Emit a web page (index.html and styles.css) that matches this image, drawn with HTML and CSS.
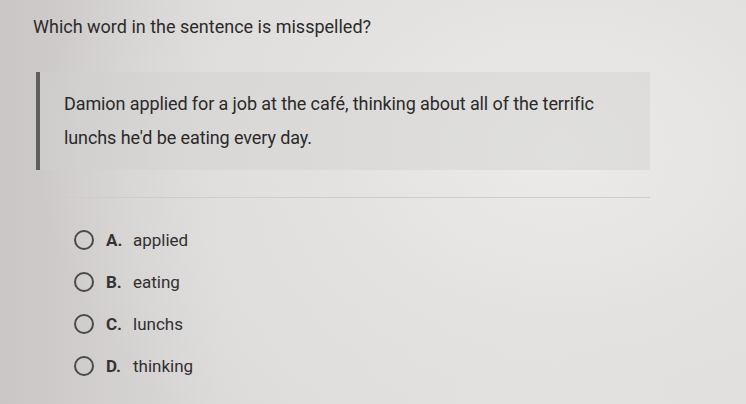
FILE: index.html
```html
<!DOCTYPE html>
<html>
<head>
<meta charset="utf-8">
<link rel="stylesheet" href="styles.css">
</head>
<body>
<main class="page">
  <h1 class="question">Which word in the sentence is misspelled?</h1>
  <blockquote class="passage">
    <p>Damion applied for a job at the café, thinking about all of the terrific lunchs he'd be eating every day.</p>
  </blockquote>
  <hr class="divider">
  <ul class="options">
    <li class="option"><span class="radio"></span><span class="letter">A.</span><span class="answer">applied</span></li>
    <li class="option"><span class="radio"></span><span class="letter">B.</span><span class="answer">eating</span></li>
    <li class="option"><span class="radio"></span><span class="letter">C.</span><span class="answer">lunchs</span></li>
    <li class="option"><span class="radio"></span><span class="letter">D.</span><span class="answer">thinking</span></li>
  </ul>
</main>
</body>
</html>
```
FILE: styles.css
```css
html, body {
  margin: 0;
  padding: 0;
  width: 746px;
  height: 404px;
  overflow: hidden;
}
body {
  background:
    radial-gradient(ellipse 520px 380px at 560px 150px, #ecebe9 0%, #e4e2e0 45%, rgba(210,206,205,0) 100%),
    linear-gradient(90deg, #c9c6c5 0%, #dcdad8 30%, #e2e0de 70%, #e0dedc 100%);
  font-family: Roboto, "Liberation Sans", sans-serif;
  color: #2e2e2e;
}
.page {
  padding: 14px 0 0 33px;
}
.question {
  margin: 0;
  font-size: 18px;
  font-weight: 400;
  line-height: 26px;
  color: #2b2b2b;
}
.passage {
  margin: 32px 0 0 3px;
  width: 614px;
  padding: 15px 20px 15px 24px;
  box-sizing: border-box;
  border-left: 4px solid #5e5e5e;
  background: rgba(208, 208, 208, 0.45);
}
.passage p {
  margin: 0;
  font-size: 18px;
  line-height: 34px;
  letter-spacing: -0.1px;
  color: #2a2a2a;
  max-width: 560px;
}
.divider {
  margin: 27px 0 0 12px;
  width: 605px;
  border: 0;
  border-top: 1px solid #cfcdcb;
}
.options {
  list-style: none;
  margin: 32px 0 0 0;
  padding: 0 0 0 41px;
  display: flex;
  flex-direction: column;
  gap: 22px;
}
.option {
  display: flex;
  align-items: center;
  height: 20px;
  font-size: 17px;
}
.radio {
  width: 16px;
  height: 16px;
  border: 2px solid #4a4a4a;
  border-radius: 50%;
  margin-right: 12px;
  flex: none;
}
.letter {
  font-weight: 700;
  color: #333;
  width: 27px;
}
.answer {
  color: #303030;
}
```
